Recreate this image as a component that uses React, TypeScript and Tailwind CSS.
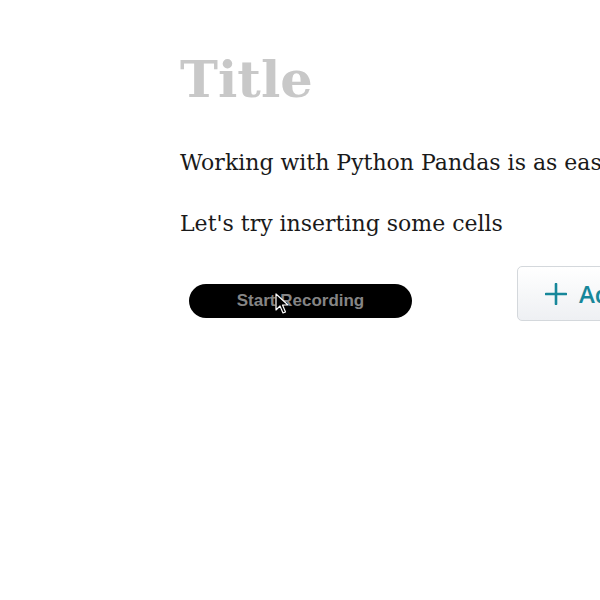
import React from "react";

export default function App() {
  return (
    <div className="w-[600px] h-[600px] overflow-hidden bg-white relative">
      <div className="pl-[180px] pt-[46px] w-[900px]" style={{ fontFamily: '"DejaVu Serif", "Liberation Serif", serif' }}>
        <h1 className="text-[51px] leading-[66px] font-bold text-[#c8c8c8]">Title</h1>
        <p className="mt-[36px] text-[22px] leading-[30px] text-[#1a1a1a] whitespace-nowrap">
          Working with Python Pandas is as easy as it gets
        </p>
        <p className="mt-[31px] text-[22px] leading-[30px] text-[#1a1a1a] whitespace-nowrap">Let's try inserting some cells</p>
        <div className="mt-[27px] flex items-start">
          <div className="relative mt-[18px] ml-[9px] w-[223px] h-[34px] rounded-full bg-black flex items-center justify-center">
            <span className="text-[17px] font-bold text-[#858585]" style={{ fontFamily: '"Liberation Sans", Arial, sans-serif' }}>
              Start Recording
            </span>
            <svg className="absolute left-[86px] top-[9px]" width="14" height="22" viewBox="0 0 14 22">
              <path d="M1 1 L1 17 L5 13 L8 20 L10.5 19 L7.5 12 L13 12 Z" fill="#000" stroke="#fff" strokeWidth="1.2" strokeLinejoin="round" />
            </svg>
          </div>
          <button className="ml-[105px] h-[55px] pl-[27px] pr-[24px] rounded-[5px] border border-[#d4d8dc] bg-gradient-to-b from-white to-[#eef0f3] flex items-center gap-[12px] text-[#17879a]" style={{ fontFamily: '"Open Sans", sans-serif' }}>
            <svg width="22" height="22" viewBox="0 0 22 22">
              <path d="M11 1 V21 M1 11 H21" stroke="#17879a" strokeWidth="2.6" strokeLinecap="round" />
            </svg>
            <span className="text-[24px] font-semibold">Add cell</span>
          </button>
        </div>
      </div>
    </div>
  );
}
